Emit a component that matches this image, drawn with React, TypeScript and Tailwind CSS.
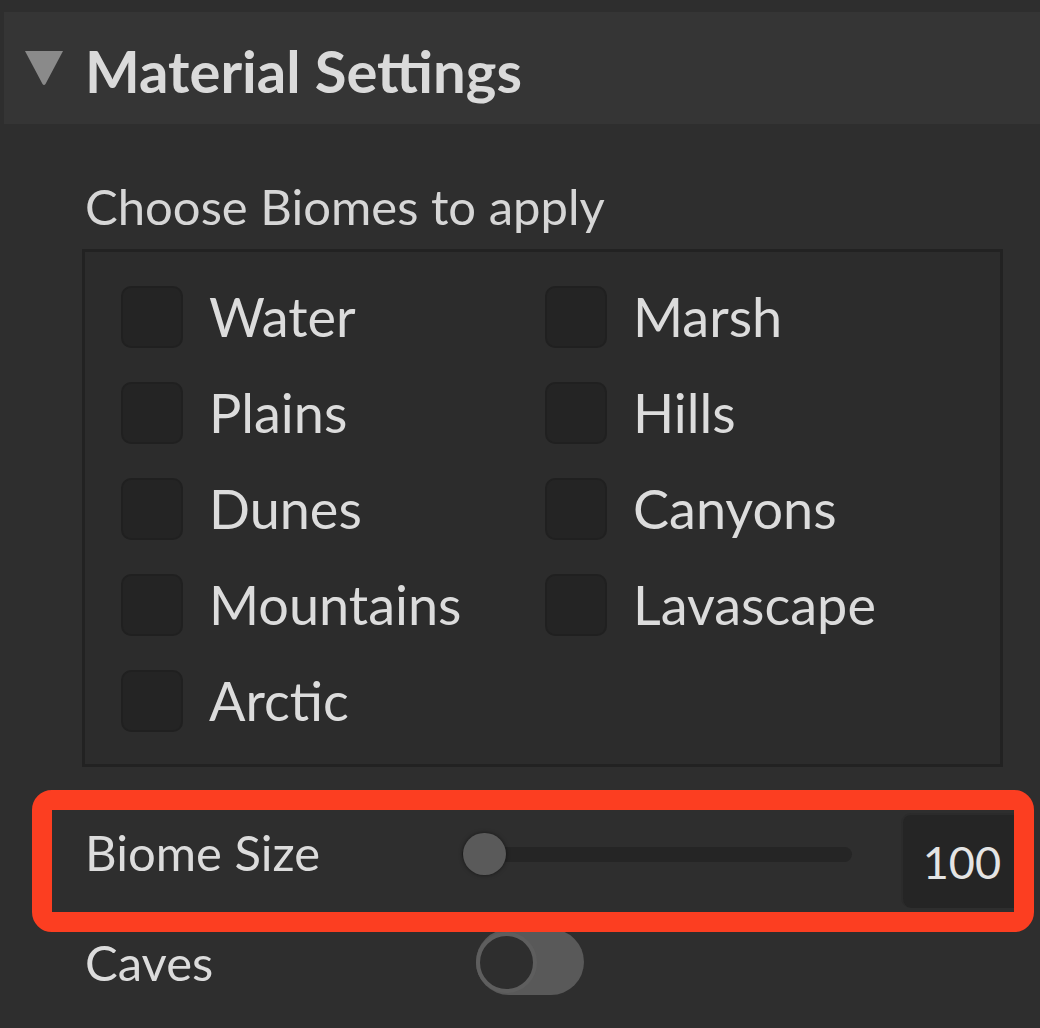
const biomes = [
  ["Water", "Marsh"],
  ["Plains", "Hills"],
  ["Dunes", "Canyons"],
  ["Mountains", "Lavascape"],
  ["Arctic", null],
];

const font = { fontFamily: "Lato, 'Noto Sans', sans-serif" };

const Checkbox = ({ label }: { label: string }) => (
  <div className="flex items-center gap-[26px] h-[62px]">
    <div className="w-[62px] h-[62px] shrink-0 rounded-[10px] bg-[#242424] border-[2px] border-[#202020]" />
    <span className="text-[54px] leading-[64px] text-[#dcdcdc]">{label}</span>
  </div>
);

const App = () => {
  return (
    <div className="w-[1040px] h-[1028px] bg-[#2e2e2e] overflow-hidden pt-[12px]" style={font}>
      {/* section header */}
      <header className="ml-[4px] h-[112px] bg-[#353535] flex items-center">
        <svg className="ml-[20px] shrink-0" width="40" height="36" viewBox="0 0 40 36">
          <path d="M1 1 H39 L21.5 34 Q20 36 18.5 34 Z" fill="#8a8a8a" />
        </svg>
        <h1 className="ml-[21px] mt-[6px] text-[58px] leading-[64px] font-bold text-[#dadada]">
          Material Settings
        </h1>
      </header>

      <p className="mt-[50px] ml-[85px] text-[49px] leading-[64px] text-[#d6d6d6]">
        Choose Biomes to apply
      </p>

      <div className="mt-[11px] ml-[82px] w-[921px] h-[518px] border-[3px] border-[#222222] bg-[#2c2c2c] pt-[34px] pl-[36px]">
        <div className="grid grid-cols-[424px_1fr] gap-y-[34px]">
          {biomes.flatMap(([a, b]) => [
            <Checkbox key={a} label={a as string} />,
            b ? <Checkbox key={b} label={b} /> : <div key={a + "-empty"} />,
          ])}
        </div>
      </div>

      {/* highlighted row */}
      <div className="relative z-10 mt-[23px] ml-[32px] w-[1002px] h-[142px] border-[20px] border-[#fc3e21] rounded-[20px] overflow-hidden bg-[#2e2e2e]">
        <div className="flex items-start h-full">
          <span className="mt-[10px] ml-[33px] w-[377px] shrink-0 text-[49px] leading-[64px] text-[#dcdcdc]">
            Biome Size
          </span>
          <div className="relative mt-[23px] w-[390px] h-[42px] shrink-0">
            <div className="absolute left-0 right-0 top-[14px] h-[15px] rounded-full bg-[#252525]" />
            <div className="absolute left-[1px] top-0 w-[43px] h-[42px] rounded-full bg-[#5a5a5a] shadow-[0_0_4px_rgba(0,0,0,0.5)]" />
          </div>
          <div className="mt-[3px] ml-[49px] w-[140px] h-[95px] shrink-0 rounded-[10px] bg-[#252525] border-l-[2px] border-t-[2px] border-[#2b2b2b] flex items-center justify-end pr-[40px]">
            <span className="text-[45px] leading-[64px] text-[#e4e4e4]">100</span>
          </div>
        </div>
      </div>

      <div className="-mt-[4px] flex items-center h-[68px]">
        <span className="ml-[85px] w-[391px] shrink-0 text-[49px] leading-[64px] text-[#dcdcdc]">
          Caves
        </span>
        <div className="w-[108px] h-[66px] rounded-full bg-[#595959] flex items-center">
          <div className="w-[61px] h-[61px] rounded-full bg-[#2e2e2e] border-[4px] border-[#5e5e5e]" />
        </div>
      </div>
    </div>
  );
};

export default App;
